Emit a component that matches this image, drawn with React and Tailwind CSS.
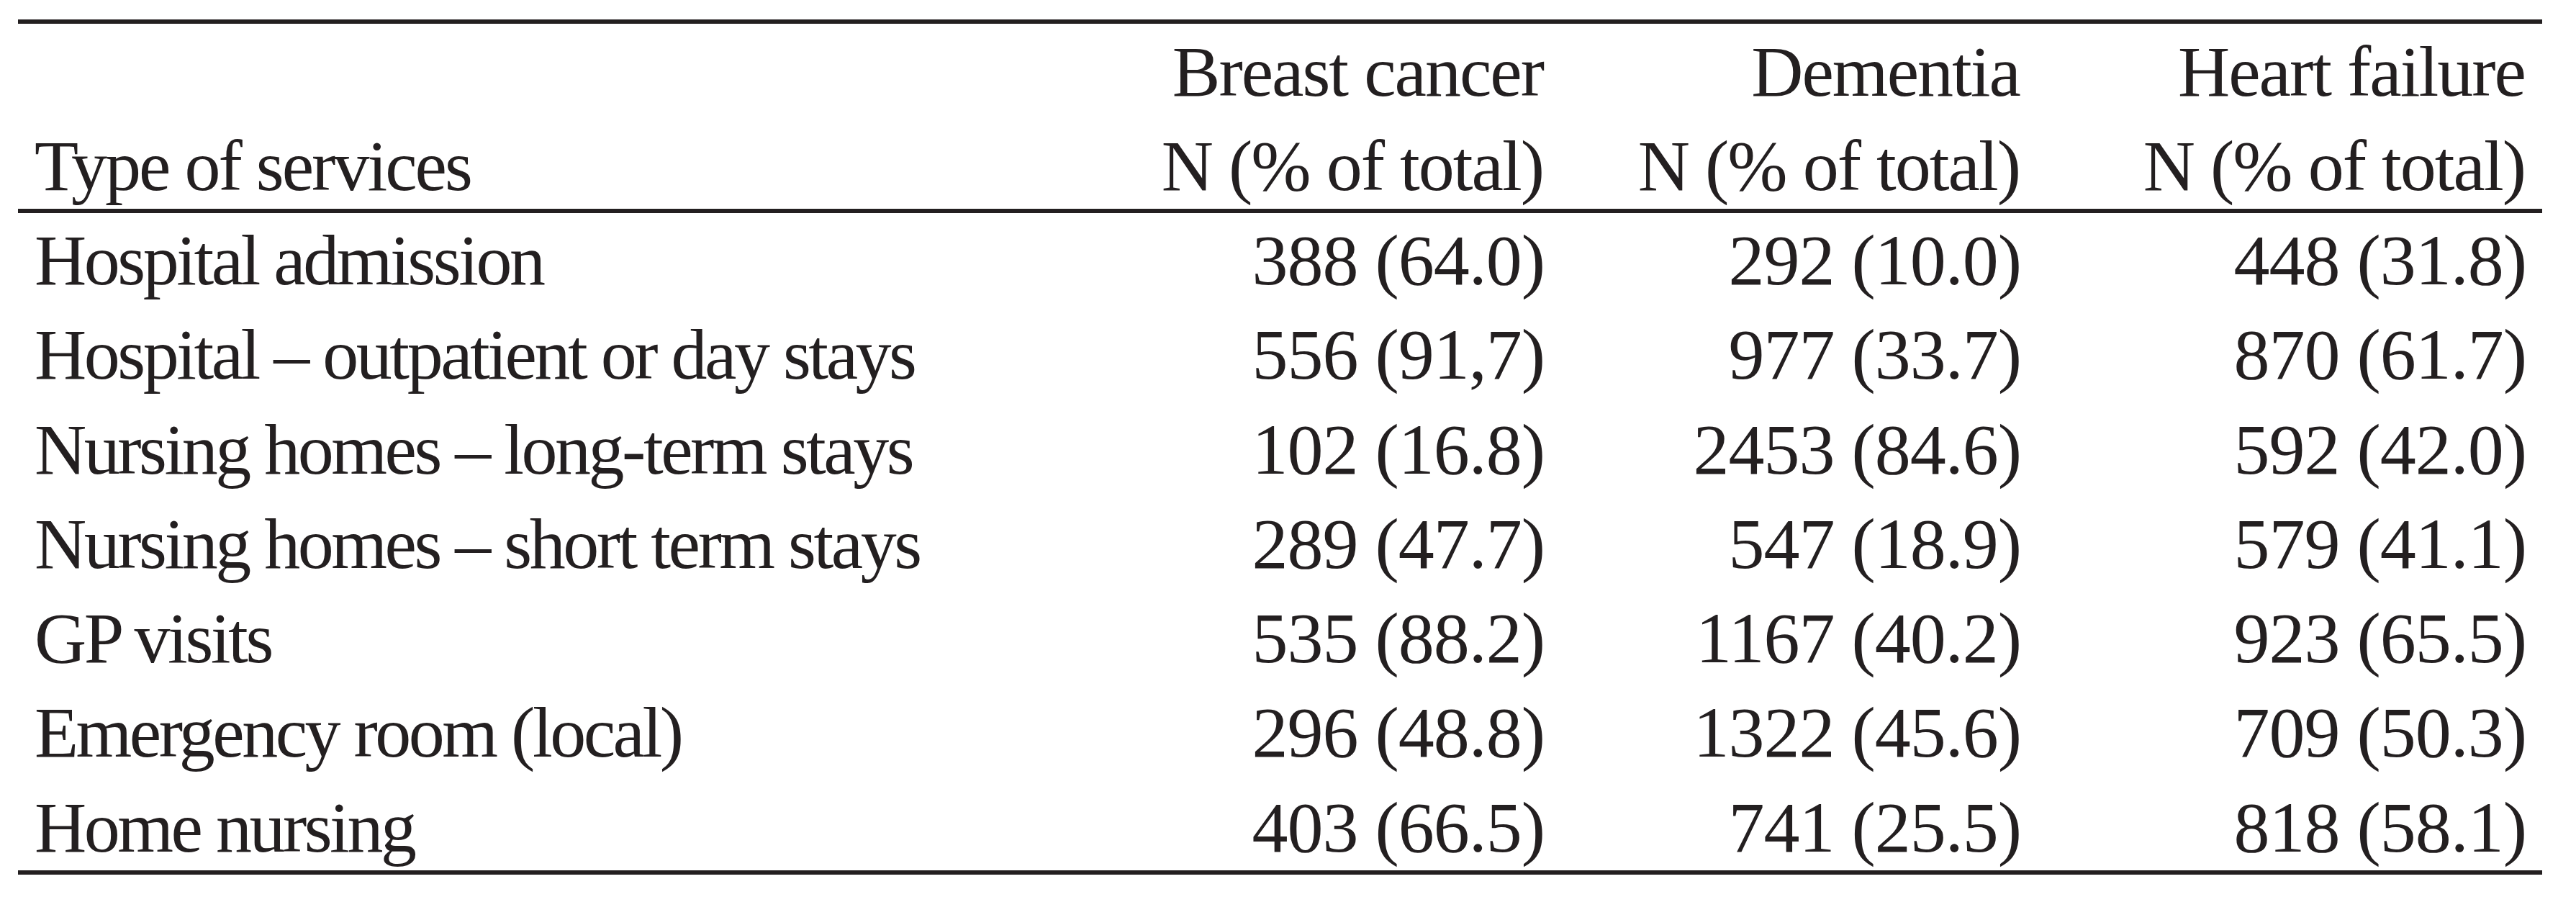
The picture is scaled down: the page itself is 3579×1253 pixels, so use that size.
import React from "react";

const rows = [
  ["Hospital admission", "388 (64.0)", "292 (10.0)", "448 (31.8)"],
  ["Hospital – outpatient or day stays", "556 (91,7)", "977 (33.7)", "870 (61.7)"],
  ["Nursing homes – long-term stays", "102 (16.8)", "2453 (84.6)", "592 (42.0)"],
  ["Nursing homes – short term stays", "289 (47.7)", "547 (18.9)", "579 (41.1)"],
  ["GP visits", "535 (88.2)", "1167 (40.2)", "923 (65.5)"],
  ["Emergency room (local)", "296 (48.8)", "1322 (45.6)", "709 (50.3)"],
  ["Home nursing", "403 (66.5)", "741 (25.5)", "818 (58.1)"],
];

const heads = ["Breast cancer", "Dementia", "Heart failure"];

function App() {
  return (
    <div
      className="min-h-screen w-full bg-white text-[#231f20] pt-[27px] pl-[25px]"
      style={{ fontFamily: '"Liberation Serif", "Times New Roman", serif' }}
    >
      <div className="w-[3507px]">
        {/* top rule */}
        <div className="h-[6px] bg-[#231f20]" />

        {/* header */}
        <div className="h-[257px] pt-[1px] px-[23px] grid grid-cols-[1398px_700px_662px_702px] text-[100px] leading-[131px] whitespace-nowrap">
          <div className="tracking-[-3px]">
            <div>&nbsp;</div>
            <div>Type of services</div>
          </div>
          {heads.map((h) => (
            <div key={h} className="text-right tracking-[-2px] pr-[2px]">
              <div>{h}</div>
              <div>N (% of total)</div>
            </div>
          ))}
        </div>

        <div className="h-[6px] bg-[#231f20]" />

        {/* body */}
        <div className="h-[913px] px-[23px] text-[100px] leading-[131.3px] whitespace-nowrap">
          {rows.map((r) => (
            <div key={r[0]} className="grid grid-cols-[1398px_700px_662px_702px]">
              <div className="tracking-[-3.5px]">{r[0]}</div>
              <div className="text-right tracking-[-1px]">{r[1]}</div>
              <div className="text-right tracking-[-1px]">{r[2]}</div>
              <div className="text-right tracking-[-1px]">{r[3]}</div>
            </div>
          ))}
        </div>

        <div className="h-[6px] bg-[#231f20]" />
      </div>
    </div>
  );
}

export default App;
